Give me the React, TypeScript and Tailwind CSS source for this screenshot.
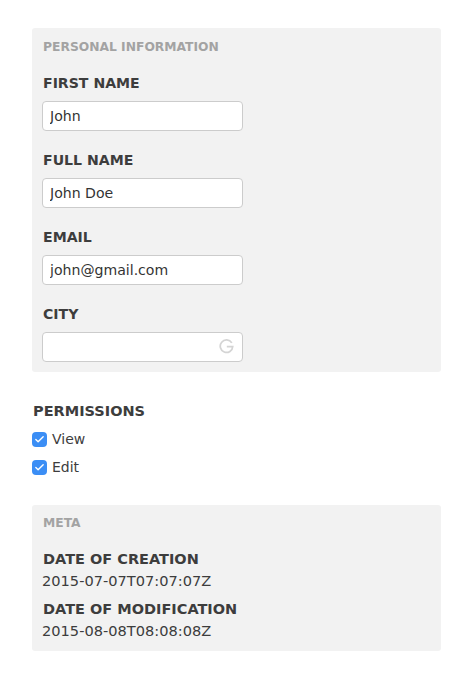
import { Check } from "lucide-react";

const font = { fontFamily: '"DejaVu Sans", Verdana, sans-serif' };

function Field({ label, value, icon }: { label: string; value?: string; icon?: boolean }) {
  return (
    <div className="flex flex-col">
      <label className="pl-px text-[14.1px] leading-[20px] font-bold text-[#3d3d3d]">{label}</label>
      <div className="relative mt-[8px] w-[201px]">
        <input
          readOnly
          value={value ?? ""}
          className="block h-[30px] w-full rounded-[4px] border border-[#cccccc] bg-white px-[7px] text-[14.1px] text-[#333] outline-none"
        />
        {icon && (
          <svg viewBox="0 0 24 24" className="absolute right-[9px] top-[7px] size-[15px]" fill="none" stroke="#d4d4d4" strokeWidth="2.8">
            <path d="M20.5 6.2A10 10 0 1 0 22 12H12.5" />
          </svg>
        )}
      </div>
    </div>
  );
}

function Perm({ label }: { label: string }) {
  return (
    <div className="flex h-[28px] items-center gap-[5px] text-[14px] text-[#3d3d3d]">
      <span className="flex size-[15px] items-center justify-center rounded-[4px] bg-[#3b8ef5]">
        <Check className="size-[11px] text-white" strokeWidth={3} />
      </span>
      {label}
    </div>
  );
}

export default function App() {
  return (
    <div style={font} className="min-h-[682px] bg-white px-[32px] pt-[28px]">
      <div className="w-[409px] rounded-[3px] bg-[#f2f2f2] px-[10px] pt-[11px] pb-[10px]">
        <h2 className="pl-px text-[12.3px] leading-[16px] font-bold text-[#a3a3a3]">PERSONAL INFORMATION</h2>
        <div className="mt-[18px] flex flex-col gap-[19px]">
          <Field label="FIRST NAME" value="John" />
          <Field label="FULL NAME" value="John Doe" />
          <Field label="EMAIL" value="john@gmail.com" />
          <Field label="CITY" icon />
        </div>
      </div>

      <div className="mt-[29px]">
        <div className="pl-px text-[14.5px] leading-[20px] font-bold text-[#3d3d3d]">PERMISSIONS</div>
        <div className="mt-[4px]">
          <Perm label="View" />
          <Perm label="Edit" />
        </div>
      </div>

      <div className="mt-[24px] w-[409px] rounded-[3px] bg-[#f2f2f2] px-[10px] pt-[10px] pb-[10px]">
        <h2 className="pl-px text-[12.3px] leading-[16px] font-bold text-[#a3a3a3]">META</h2>
        <div className="mt-[18px] pl-px text-[14.5px] leading-[20px] font-bold text-[#3d3d3d]">DATE OF CREATION</div>
        <div className="mt-[2px] text-[14.6px] leading-[20px] text-[#3d3d3d]">2015-07-07T07:07:07Z</div>
        <div className="mt-[8px] pl-px text-[14.5px] leading-[20px] font-bold text-[#3d3d3d]">DATE OF MODIFICATION</div>
        <div className="mt-[2px] text-[14.6px] leading-[20px] text-[#3d3d3d]">2015-08-08T08:08:08Z</div>
      </div>
    </div>
  );
}
